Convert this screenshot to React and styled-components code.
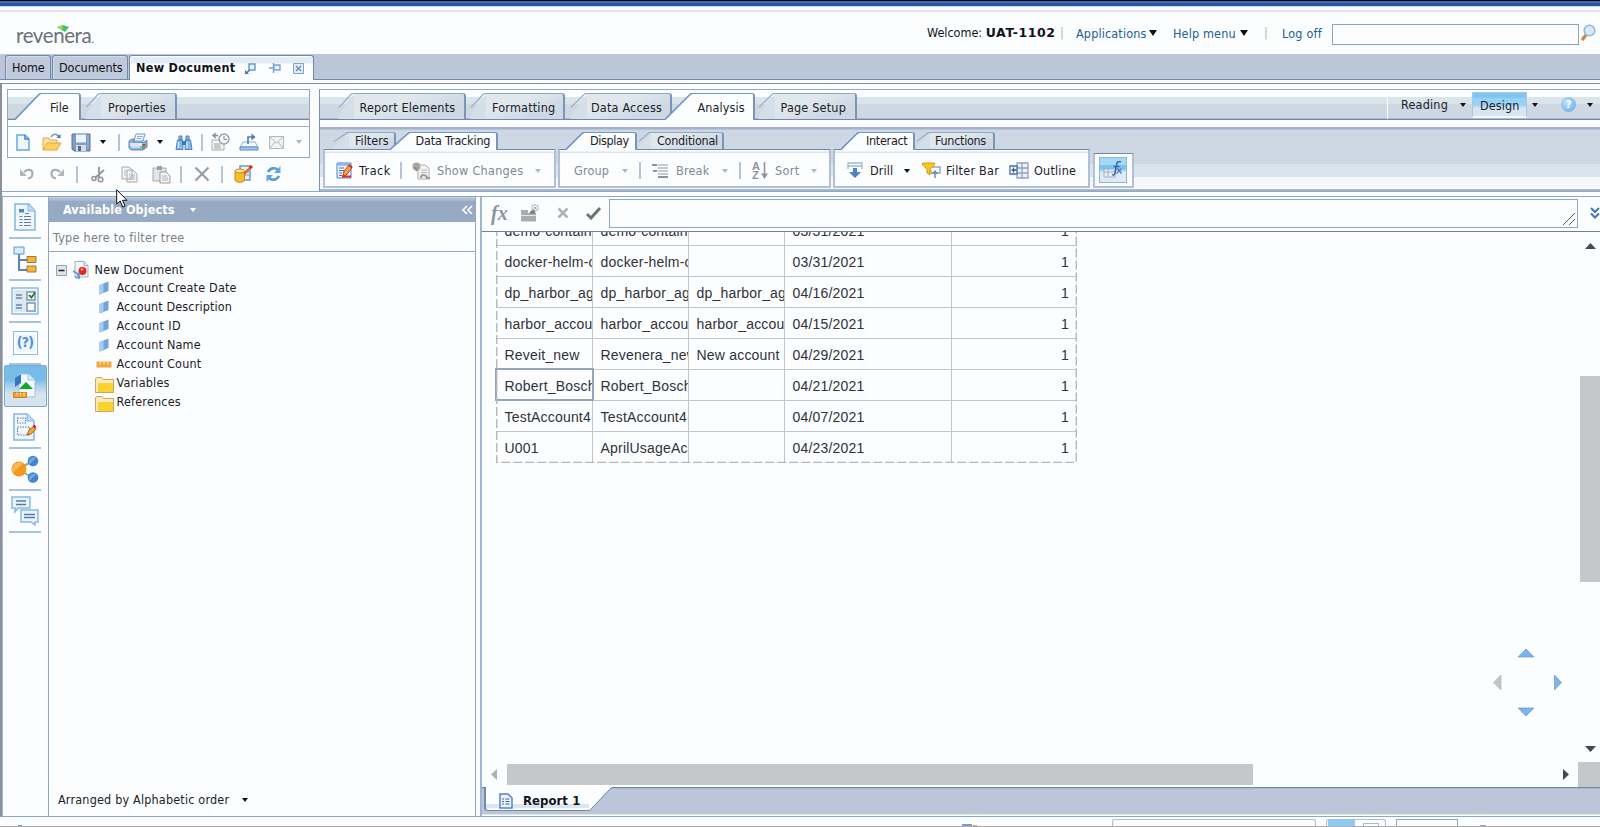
import React from 'react';
import styled, { createGlobalStyle, css } from 'styled-components';

const UI = "'DejaVu Sans Condensed', 'DejaVu Sans', sans-serif";
const LINE = '#91a7c4';
const DARK_LINE = '#7189ad';
const WHITE = '#fcfdff';

const GlobalStyle = createGlobalStyle`
  * { box-sizing: border-box; }
  body { margin: 0; overflow: hidden; background: ${WHITE}; }
  svg { display: block; flex: none; }
`;

const Page = styled.div`
  width: 1600px;
  height: 827px;
  overflow: hidden;
  display: flex;
  flex-direction: column;
  background: ${WHITE};
  color: #1d2127;
  font-family: ${UI};
  font-size: 12.5px;
  line-height: 16px;
  white-space: nowrap;
`;

/* ---------- shared bits ---------- */
const Text = styled.span`
  flex: none;
  margin-left: ${(p) => p.$ml || 0}px;
  width: ${(p) => (p.$w ? `${p.$w}px` : 'auto')};
  color: ${(p) => p.$color || 'inherit'};
  font-weight: ${(p) => (p.$bold ? 'bold' : 'normal')};
  letter-spacing: ${(p) => (p.$ls === undefined ? 0.1 : p.$ls)}px;
`;

const Slot = styled.span`
  flex: none;
  display: flex;
  margin-left: ${(p) => p.$ml || 0}px;
`;

const Caret = styled.span`
  flex: none;
  margin-left: ${(p) => p.$ml || 0}px;
  border: ${(p) => p.$s || 3}px solid transparent;
  border-top: ${(p) => p.$h || 4}px solid ${(p) => p.$color || '#111'};
  border-bottom: 0;
`;

const Divider = styled.span`
  flex: none;
  width: 2px;
  height: 17px;
  margin-left: ${(p) => p.$ml || 0}px;
  background: #b3c3d9;
`;

/* ---------- header ---------- */
const TopStripe = styled.div`
  flex: none;
  height: 12px;
  background: linear-gradient(#000 0 1px, #3f6bb5 1px 3px, #2d53a4 3px 6px, #c3d3ea 6px 7px, ${WHITE} 7px 10px, #dde5f2 10px 12px);
`;

const Header = styled.header`
  flex: none;
  height: 42px;
  display: flex;
  align-items: center;
`;

const Logo = styled.div`
  position: relative;
  width: 909px;
  padding: 8px 0 0 16px;
  color: #6a7078;
  font-family: Lato, sans-serif;
  font-size: 20.5px;
  letter-spacing: -0.4px;
  line-height: 24px;
  svg { position: absolute; left: 57px; top: 10px; }
  small { font-size: 12px; }
`;

const UserName = styled.b`
  font-family: 'DejaVu Sans', sans-serif;
  letter-spacing: 0.6px;
`;

const HeaderLink = styled(Text)`
  color: #22608f;
  padding-top: 1px;
`;

const SearchBox = styled.div`
  flex: none;
  width: 247px;
  height: 21px;
  margin-left: 8px;
  margin-top: 2px;
  border: 1px solid #89a3c4;
`;

/* ---------- document tabs ---------- */
const DocTabs = styled.nav`
  flex: none;
  height: 26px;
  display: flex;
  align-items: flex-end;
  padding-left: 5px;
  background: #bbc6d9;
  border-bottom: 1px solid ${DARK_LINE};
`;

const DocTab = styled.div`
  height: ${(p) => (p.$active ? 25 : 24)}px;
  width: ${(p) => p.$w}px;
  margin-right: 1px;
  margin-bottom: ${(p) => (p.$active ? -1 : 0)}px;
  display: flex;
  align-items: center;
  padding-left: 6px;
  border: 1px solid ${DARK_LINE};
  border-bottom: 0;
  border-radius: 3px 3px 0 0;
  background: ${(p) => (p.$active ? `linear-gradient(#e4ecf3 0 7px, ${WHITE} 8px)` : '#c0cadb')};
  box-shadow: inset 1px 1px 0 ${(p) => (p.$active ? '#fff' : '#d3dbe7')};
  color: #10141a;
`;

const Gap = styled.div`
  flex: none;
  height: 4px;
  border-bottom: 1px solid #87909e;
`;

/* ---------- ribbon ---------- */
const Ribbon = styled.section`
  flex: none;
  height: 113px;
  display: flex;
  border-bottom: 1px solid #8ca9c7;
  border-left: 2px solid #8b909c;
  padding-top: 5px;
`;

const FileSide = styled.div`
  width: 317px;
  height: 103px;
  padding-left: 5px;
  border-bottom: 1px solid #8ca9c7;
`;

const FileBox = styled.div`
  width: 303px;
  height: 69px;
  border: 1px solid ${LINE};
`;

const TabStrip = styled.div`
  height: 30px;
  display: flex;
  align-items: flex-end;
  background: linear-gradient(${WHITE} 0 7px, #dae4eb 7px 14px, #ced8e3 14px 28px, #a9b9cf 28px 29px, ${DARK_LINE} 29px 30px);
`;

const TabWrap = styled.div`
  position: relative;
  z-index: ${(p) => (p.$active ? 1 : 0)};
  display: flex;
  height: ${(p) => p.$h}px;
  margin-left: ${(p) => p.$ml}px;
  margin-bottom: ${(p) => (p.$active ? 0 : 1)}px;
`;

const TabBody = styled.div`
  width: ${(p) => p.$w}px;
  padding-left: ${(p) => p.$pad}px;
  padding-top: ${(p) => (p.$small ? 0 : 6)}px;
  border-top: 1px solid ${(p) => (p.$active ? '#6f9acb' : LINE)};
  border-right: 2px solid #7c94b8;
  border-top-right-radius: 3px;
  letter-spacing: ${(p) => p.$ls}px;
  ${(p) => (p.$active
    ? css`background: ${WHITE};`
    : css`background: linear-gradient(160deg, #e0e8ee 35%, #ced8e3 75%);`)}
`;

const Slant = ({ w, h, active }) => (
  <svg width={w} height={h}>
    {active && <path d={`M0 ${h}L${w} 0V${h}Z`} fill={WHITE} />}
    {!active && <path d={`M${w * 0.2} ${h * 0.7}L${w} 1V${h}H0Z`} fill="#d5dfe8" />}
    {active
      ? <path d={`M0 ${h - 0.5}L${w - 2} 1.5Q${w - 1} .5 ${w} .5`} fill="none" stroke="#7094c0" strokeWidth="1.6" />
      : <path d={`M1 ${h * 0.55}L${w - 3} 1.5Q${w - 2} .5 ${w} .5`} fill="none" stroke="#94abc8" strokeWidth="1.1" />}
  </svg>
);

const Tab = ({ label, ml, slant, w, pad, active, small, ls = 0 }) => {
  const h = (small ? 17 : 26) + (active ? 1 : 0);
  return (
    <TabWrap $ml={ml} $h={h} $active={active}>
      <Slant w={slant} h={h} active={active} />
      <TabBody $w={w} $pad={pad} $active={active} $small={small} $ls={ls}>{label}</TabBody>
    </TabWrap>
  );
};

const StripGap = styled.div`
  height: ${(p) => p.$h || 7}px;
  border-bottom: 1px solid #a0b2cc;
`;

const IconRow = styled.div`
  height: ${(p) => p.$h}px;
  display: flex;
  align-items: center;
`;

const MainRibbon = styled.div`
  flex: 1;
  height: 103px;
  border-top: 1px solid ${LINE};
  border-left: 1px solid #7c94b8;
  border-bottom: 1px solid #91a7c4;
`;

const SubRibbon = styled.div`
  height: 63px;
  display: flex;
  align-items: flex-end;
  padding: 0 0 3px 3px;
  background: linear-gradient(#a0b2cc 0 1px, #b7c4d6 1px 2px, #ced8e4 2px 36px, #dae4ed 36px 49px, #f4f8fc 49px 59px, ${WHITE} 59px 61px, #a4b6cf 61px 63px);
`;

const Group = styled.div`
  width: ${(p) => p.$w}px;
  margin-right: ${(p) => (p.$mr === undefined ? 2 : p.$mr)}px;
`;

const SubTabs = styled.div`
  height: 18px;
  display: flex;
  align-items: flex-end;
  position: relative;
  margin-bottom: -1px;
`;

const GroupBox = styled.div`
  height: ${(p) => p.$h || 39}px;
  display: flex;
  align-items: center;
  padding-top: ${(p) => (p.$h ? 0 : 5)}px;
  background: ${(p) => (p.$h ? WHITE : `linear-gradient(${WHITE} 0 1px, #dbe5ef 2px 3px, ${WHITE} 3px)`)};
  border: 2px solid #b2c0d5;
  border-top: 1px solid ${DARK_LINE};
`;

const FxButton = styled.div`
  width: 28px;
  height: 26px;
  margin-left: 4px;
  padding: 3px;
  border: 1px solid #8fb7dc;
  background: linear-gradient(#a5d8f5 0 30%, #7cc2ee 30% 45%, #dcebf6 60%);
`;

const ModeBar = styled.div`
  align-self: stretch;
  margin-left: auto;
  width: 213px;
  height: 29px;
  display: flex;
  align-items: center;
  border-left: 1px solid ${WHITE};
`;

const DesignButton = styled.div`
  width: 55px;
  height: 26px;
  margin-left: 6px;
  padding: 5px 0 0 7px;
  border: 1px solid #a7c8e3;
  border-bottom: 2px solid #f4fbff;
  background: linear-gradient(#7fc6f0 0 5px, #97d2f5 5px 12px, #d7e5f1 15px);
  letter-spacing: 0.1px;
`;

/* ---------- workspace ---------- */
const Workspace = styled.main`
  flex: none;
  height: 620px;
  display: flex;
  border-bottom: 1px solid #8ca9c7;
  border-left: 2px solid #8b909c;
`;

const Rail = styled.aside`
  flex: none;
  width: 47px;
  padding-right: 1px;
  border-right: 1px solid ${LINE};
  border-left: 1px solid #a8b9d0;
  display: flex;
  flex-direction: column;
  align-items: center;
`;

const RailItem = styled.div`
  flex: none;
  width: ${(p) => (p.$active ? 43 : 32)}px;
  height: 42px;
  display: flex;
  align-items: center;
  justify-content: center;
  border-bottom: 2px solid #a5c3dd;
  ${(p) => p.$active && css`
    border: 1px solid #7ca8cf;
    border-radius: 2px;
    background: linear-gradient(#78bde9 0 14px, #9bcbeb 18px, #d8e3ed 28px);
  `}
`;

const Objects = styled.section`
  flex: none;
  width: 427px;
  display: flex;
  flex-direction: column;
  border-right: 1px solid ${LINE};
`;

const ObjectsHead = styled.div`
  height: 25px;
  display: flex;
  align-items: center;
  padding: 1px 0 0 14px;
  color: #fff;
  background: linear-gradient(#c3cfdf 0, #97aac4 5px);
`;

const FilterBox = styled.div`
  height: 30px;
  padding: 8px 0 0 4px;
  color: #7c8085;
  border-bottom: 1px solid #8ca9c7;
  letter-spacing: 0.26px;
`;

const Tree = styled.div`
  flex: 1;
  padding-top: 9px;
`;

const TreeRow = styled.div`
  height: ${(p) => p.$h || 19}px;
  display: flex;
  align-items: center;
`;

const TreeIcon = styled.span`
  flex: none;
  width: 20px;
  margin-left: 45px;
  padding-top: ${(p) => p.$drop || 0}px;
  display: flex;
  justify-content: center;
`;

const Arranged = styled.div`
  height: 33px;
  padding: 0 0 0 9px;
  display: flex;
  align-items: center;
`;

const Report = styled.section`
  flex: 1;
  min-width: 0;
  margin-left: 4px;
  border-left: 2px solid #a0b5cf;
  display: flex;
  flex-direction: column;
`;

const FormulaBar = styled.div`
  flex: none;
  height: 35px;
  display: flex;
  align-items: center;
  padding-bottom: 3px;
  border-bottom: 1px solid #74809a;
`;

const FormulaInput = styled.div`
  flex: none;
  width: 969px;
  height: 29px;
  margin: 1px 0 0 8px;
  display: flex;
  align-items: flex-end;
  justify-content: flex-end;
  padding: 2px;
  border: 1px solid ${LINE};
`;

const Canvas = styled.div`
  flex: 1;
  min-height: 0;
  display: flex;
  overflow: hidden;
`;

const Sheet = styled.div`
  position: relative;
  flex: 1;
  overflow: hidden;
  padding-left: 14px;
`;

const Grid = styled.div`
  position: relative;
  width: 581px;
  margin-top: -17px;
`;

const DashFrame = styled.svg`
  position: absolute;
  left: 0;
  top: 0;
`;

const GridRow = styled.div`
  display: grid;
  grid-template-columns: 97px 96px 96px 167px 125px;
  height: 31px;
  border-bottom: 1px solid ${(p) => (p.$last ? 'transparent' : '#c3c5c9')};
`;

const Cell = styled.div`
  overflow: hidden;
  padding: 8px 8px 0 7.5px;
  border-right: 1px solid #c3c5c9;
  color: #2f3237;
  font-family: 'Liberation Sans', Arial, sans-serif;
  font-size: 14px;
  letter-spacing: 0.2px;
  text-overflow: clip;
  &:nth-child(-n + 3) { padding-right: 0; }
  &:first-child { padding-left: 8.5px; }
  &:last-child { text-align: right; border-right: 0; }
  ${(p) => p.$selected && css`
    outline: 2px solid #93a5b8;
    outline-offset: -1px;
    padding-right: 1px;
    margin: -1px 0 0 0;
    padding-top: 9px;
  `}
`;

const NavPad = styled.svg`
  position: absolute;
  left: 1007px;
  top: 415px;
`;

const VScroll = styled.div`
  flex: none;
  width: 22px;
  display: flex;
  flex-direction: column;
  align-items: center;
  padding: 11px 0 0 2px;
`;

const VThumb = styled.div`
  width: 20px;
  height: 206px;
  margin: 127px 0 164px;
  background: #c6c7c9;
`;

const HScroll = styled.div`
  flex: none;
  height: 25px;
  display: flex;
  align-items: center;
  padding-left: 9px;
`;

const HThumb = styled.div`
  width: 746px;
  height: 21px;
  margin-left: 10px;
  background: #c6c7c9;
`;

const Corner = styled.div`
  width: 22px;
  height: 25px;
  margin-left: auto;
  background: #c6c7c9;
`;

const SheetTabs = styled.div`
  flex: none;
  height: 29px;
  display: flex;
  align-items: flex-start;
  border-top: 1px solid ${DARK_LINE};
  background: linear-gradient(#a9b8cf 0 1px, #bbc6d9 1px 26px, #dfe8f1 26px 27px, ${WHITE} 27px);
`;

const SheetTab = styled.div`
  width: 105px;
  height: 24px;
  margin: -1px 0 0 2px;
  display: flex;
  align-items: center;
  padding: 4px 0 0 13px;
  border-left: 2px solid ${DARK_LINE};
  border-bottom: 1px solid ${DARK_LINE};
  border-radius: 0 0 0 4px;
  background: linear-gradient(${WHITE} 0 17px, #dce6ef 17px 21px, ${WHITE} 21px);
  color: #10141a;
  font-size: 13px;
`;

const StatusBar = styled.footer`
  flex: none;
  height: 10px;
  display: flex;
  align-items: flex-end;
  border-bottom: 1px solid #a9abae;
`;

const StatusBox = styled.div`
  width: ${(p) => p.$w}px;
  height: 7px;
  margin-left: ${(p) => p.$ml}px;
  padding-left: 1px;
  display: flex;
  align-items: flex-end;
  border: 1px solid ${(p) => (p.$blue ? '#8ca9c7' : '#b9bbbf')};
  border-bottom: 0;
  border-radius: ${(p) => (p.$blue ? 0 : '3px 3px 0 0')};
`;

const StatusOn = styled.div`
  width: 27px;
  height: 6px;
  background: #8ccbf3;
`;

const StatusPane = styled.div`
  width: 16px;
  height: 3px;
  margin-left: 8px;
  border: 1px solid #9dbde0;
  border-bottom: 0;
`;

const Mark = styled.i`
  width: ${(p) => p.$w}px;
  height: ${(p) => p.$h || 1}px;
  margin-left: ${(p) => p.$ml}px;
  background: ${(p) => p.$c};
`;

const Pointer = styled.svg`
  position: absolute;
  left: 116px;
  top: 189px;
  z-index: 5;
`;

/* ---------- icons ---------- */
const Icon = ({ w = 20, h = 20, children, ...rest }) => (
  <svg width={w} height={h} viewBox={`0 0 ${w} ${h}`} fill="none" {...rest}>{children}</svg>
);

const NewIcon = () => (
  <Icon w={14} h={17}><path d="M1 1h8l4 4v11H1z" fill="#eff7fe" stroke="#6aa7df" strokeWidth="1.5" /><path d="M9 1v4h4" stroke="#3f87cc" strokeWidth="1.5" /></Icon>
);
const OpenIcon = () => (
  <Icon w={20} h={18}>
    <path d="M1 17V5h6l1 2h7v3" fill="#fbe3a0" stroke="#e0a944" />
    <path d="M1 17l4-7h14l-4 7z" fill="#fccf5e" stroke="#e0a944" />
    <path d="M9 4c2-4 7-3 8 0" stroke="#6d8bad" strokeWidth="1.4" /><path d="M18.500 1v4h-4z" fill="#4d7096" />
  </Icon>
);
const SaveIcon = () => (
  <Icon w={20} h={19}>
    <path d="M1 1h18v17H3l-2-2z" fill="#7f9cc2" stroke="#5376a6" />
    <path d="M5 1.500h10v8H5z" fill="#edf3fa" /><path d="M5 12h10v6H5z" fill="#d6dce4" /><path d="M7 13h3v5H7z" fill="#4d6b96" />
    <path d="M17 2v13" stroke="#9db8da" />
  </Icon>
);
const PrintIcon = () => (
  <Icon w={20} h={18}>
    <path d="M6 8l2-7h9l-2 7z" fill="#f2f7fc" stroke="#7996b9" />
    <path d="M9 3.500h6M8.500 5.500h5" stroke="#8db2de" />
    <path d="M1 8l3-2h2l-1 3h11l3-2v7l-4 3H3l-2-2z" fill="#8fb3dc" stroke="#5f87b9" />
    <path d="M2 10h12v3H2z" fill="#dce9f7" /><path d="M3 14h9" stroke="#dce9f7" strokeWidth="1.5" />
    <path d="M14.500 12h3" stroke="#d33" strokeWidth="2" /><path d="M14 14.500h3" stroke="#2db34a" strokeWidth="2" />
  </Icon>
);
const FindIcon = () => (
  <Icon w={18} h={17}>
    <path d="M4 2h3v4H4zM11 2h3v4h-3zM2.500 6h5L8 15.500H1zM10.500 6h5L17 15.500h-7z" fill="#82b7e8" stroke="#4a80bb" />
    <path d="M7 7h4v4H7z" fill="#3d76b5" /><path d="M3.500 8v6M12 8v6" stroke="#d7eafa" strokeWidth="1.4" />
  </Icon>
);
const HistoryIcon = () => (
  <Icon w={19} h={18}>
    <path d="M1 7h9l3 3v7H1z" fill="#f3f4f5" stroke="#a9adb3" /><path d="M3 11h6M3 13h7M3 15h7" stroke="#9fa3a9" />
    <circle cx="13" cy="6" r="5" fill="#f3f4f5" stroke="#9c9fa4" strokeWidth="1.500" />
    <path d="M13 3v3.500h3" stroke="#8a8d92" /><path d="M7 2.500H3M5 0L2 2.500 5 5" stroke="#8b8f95" strokeWidth="1.500" />
  </Icon>
);
const ExportIcon = () => (
  <Icon w={20} h={18}>
    <path d="M4 9L1 14h18l-3-5z" fill="#f2f7fc" stroke="#8fb2d8" /><path d="M1 14h18v3H1z" fill="#a9c9ea" stroke="#5a89bd" />
    <path d="M9 11V4h4" stroke="#4d7ab1" strokeWidth="1.600" /><path d="M12.500 0.500l4 3.500-4 3.500z" fill="#4d7ab1" />
  </Icon>
);
const MailIcon = () => (
  <Icon w={15} h={13}><path d="M.5.5h14v12H.5z" fill="#f2f3f5" stroke="#b4b7bb" /><path d="M1 1l6.500 6L14 1M1 12l5-6M14 12L9 6" stroke="#b4b7bb" /></Icon>
);
const UndoIcon = ({ flip }) => (
  <Icon w={16} h={14}>
    <g transform={flip ? 'matrix(-1 0 0 1 16 0)' : undefined}>
      <path d="M5 5c3-3.500 8.500-2.500 8.500 1.500 0 3-1.500 4.500-4.500 5" stroke="#a9aeb4" strokeWidth="2.200" /><path d="M1 2v7h7z" fill="#b3b7bc" />
    </g>
  </Icon>
);
const CutIcon = () => (
  <Icon w={15} h={17}>
    <path d="M8 1v10M13 4L4 12" stroke="#8e959d" strokeWidth="1.800" />
    <circle cx="3" cy="12.500" r="2" stroke="#8e959d" strokeWidth="1.500" /><circle cx="9.500" cy="13.500" r="2.300" stroke="#8e959d" strokeWidth="1.500" />
  </Icon>
);
const CopyIcon = () => (
  <Icon w={17} h={17}>
    <path d="M1 1h7l3 3v9H1zM6 4h6l4 4v8H6z" fill="#f2f3f5" stroke="#a5aab1" /><path d="M3 5h3M3 7h2M3 9h2M8 9h6M8 11h6M8 13h6" stroke="#b5bac0" />
  </Icon>
);
const PasteIcon = () => (
  <Icon w={19} h={19}>
    <path d="M1 3h13v13H1z" fill="#e1e4e8" stroke="#a5aab1" /><path d="M5 1h5v4H5z" fill="#a39e92" />
    <path d="M8 7h6l4 4v7H8z" fill="#f5f6f7" stroke="#959ba2" /><path d="M10 11h5M10 13h6M10 15h6" stroke="#aeb3b9" />
  </Icon>
);
const CrossIcon = ({ s = 16, color = '#969ca4', sw = 2.2 }) => (
  <Icon w={s} h={s}><path d={`M1.500 1.500L${s - 1.5} ${s - 1.5}M${s - 1.5} 1.500L1.500 ${s - 1.5}`} stroke={color} strokeWidth={sw} /></Icon>
);
const EditDataIcon = () => (
  <Icon w={19} h={18}>
    <path d="M6 1h10v14H6z" fill="#e9f1fb" stroke="#7098cc" strokeWidth="1.500" /><path d="M11 7h4M11 10h4" stroke="#7098cc" />
    <path d="M1 6v9c0 3 9.500 3 9.500 0V6z" fill="#f9bd2c" stroke="#c8851a" /><ellipse cx="5.700" cy="6" rx="4.800" ry="2" fill="#ffe490" stroke="#c8851a" />
    <path d="M10 9l7-7" stroke="#d9761d" strokeWidth="2.500" /><path d="M16 3l2-2" stroke="#c9302c" strokeWidth="3" />
  </Icon>
);
const RefreshIcon = () => (
  <Icon w={17} h={16}>
    <path d="M3 6c2-4 7-5 10-2M14 10c-2 4-7 5-10 2" stroke="#569bd9" strokeWidth="2.600" />
    <path d="M15.500 0v7H9z" fill="#62a7e3" /><path d="M1.500 16V9H8z" fill="#62a7e3" />
  </Icon>
);
const TrackIcon = () => (
  <Icon w={17} h={17}>
    <path d="M1 1h14v15H1z" fill="#edf4fc" stroke="#4c7ecb" /><path d="M1.500 2.500H14" stroke="#8fb4ea" strokeWidth="2.500" />
    <path d="M3 6h5M3 8.500h5M3 11h3M3 13.500h3" stroke="#4a72b4" />
    <path d="M7 14l1-5 5-6 3 2.500-5 7z" fill="#f4a13a" stroke="#cb392b" /><path d="M13 3l3 2.500" stroke="#cf2a20" strokeWidth="2" /><path d="M6 14.500h9" stroke="#e12b22" strokeWidth="2" />
  </Icon>
);
const ChangesIcon = () => (
  <Icon w={19} h={18}>
    <path d="M6 3h7l4 3v11H6z" fill="#f3f3f3" stroke="#acaeb2" /><path d="M9 8h6M9 10.500h6" stroke="#b4b7ba" />
    <circle cx="4.500" cy="4.500" r="4" fill="#aaa79e" /><path d="M3 5l2 4" stroke="#8b8a85" strokeWidth="2" />
    <path d="M9 16c0-4 5-4 6 0h3" stroke="#9b9c9e" strokeWidth="2" />
  </Icon>
);
const BreakIcon = () => (
  <Icon w={16} h={14}><path d="M6 1h10M6 7h10M6 10h10M6 13h10M6 4h10" stroke="#b3b9c0" strokeWidth="1.300" /><path d="M0 1h5M1 7h4M6 13h10" stroke="#8c949e" strokeWidth="2" /></Icon>
);
const SortLetters = styled.span`
  width: 9px;
  font-family: 'Liberation Sans', sans-serif;
  font-weight: bold;
  font-size: 11px;
  line-height: 9px;
  color: #8e959e;
  white-space: normal;
`;
const SortArrow = () => (
  <Icon w={7} h={17}><path d="M3.500 0v15" stroke="#8e959e" strokeWidth="1.600" /><path d="M0 11.500h7L3.500 17z" fill="#8e959e" /></Icon>
);
const DrillIcon = () => (
  <Icon w={16} h={17}><path d="M1 7V1h14v6M1 4h14" stroke="#9eb7d8" strokeWidth="1.300" /><path d="M6 6h4v4h4l-6 6-6-6h4z" fill="#4c82c4" /></Icon>
);
const FilterIcon = () => (
  <Icon w={19} h={17}>
    <path d="M9 5h9v6h-6M9 8v3h2" stroke="#9aa9bb" strokeWidth="1.500" /><path d="M13 16V9M10.500 12L13 9l2.500 3" stroke="#73889f" strokeWidth="1.400" />
    <path d="M.5 1h12v2L8 7v6l-3-2V7L.5 3z" fill="#ffc61a" stroke="#d79a12" />
  </Icon>
);
const OutlineIcon = () => (
  <Icon w={20} h={17}>
    <path d="M8 1h11v15H8zM8 6h11M8 11h11M13 1v15" fill="#eef3f9" stroke="#8ea3c2" strokeWidth="1.300" />
    <path d="M1 4h7v8H1z" fill="#fff" stroke="#4470a7" strokeWidth="1.300" /><path d="M2.500 8h5M4.500 5.500v5" stroke="#2c568f" strokeWidth="1.300" />
  </Icon>
);
const FxGlyph = styled.span`
  width: 17px;
  font-family: 'Liberation Serif', serif;
  font-style: italic;
  font-weight: bold;
  font-size: 20px;
  line-height: 20px;
  color: #8b94a0;
  margin-left: 9px;
`;
const HelpDot = styled.span`
  width: 15px;
  height: 15px;
  margin-left: 23px;
  border-radius: 50%;
  background: radial-gradient(circle at 40% 35%, #bfe1fb, #5ea6e0);
  color: #fff;
  font-weight: bold;
  font-size: 11px;
  line-height: 15px;
  text-align: center;
`;
const SearchIcon = () => (
  <Icon w={17} h={18}><path d="M6 11l-4 5" stroke="#d6883a" strokeWidth="3.500" /><circle cx="9.500" cy="6.500" r="5.300" fill="#d7eafb" stroke="#91b5dd" strokeWidth="1.600" /></Icon>
);

/* rail */
const DocLines = () => (
  <Icon w={22} h={28}>
    <path d="M1 1h14l6 7v19H1z" fill="#eff7fd" stroke="#82b6e4" strokeWidth="1.500" /><path d="M14 1v7h7" fill="#bddcf5" stroke="#82b6e4" />
    <path d="M5 6h5v3.500H5z" fill="#4d8bc8" /><path d="M11 10.500h4M5.500 13.500h3M10 13.500h7M5.500 16.500h3M10 16.500h7M5.500 19.500h3M10 19.500h7M5.500 22.500h3M10 22.500h7" stroke="#5f81aa" strokeWidth="1.200" />
  </Icon>
);
const MapIcon = () => (
  <Icon w={24} h={27}>
    <path d="M6 8v16h8M6 14h8" stroke="#6082b3" strokeWidth="2" /><path d="M1 1h10v7H1z" fill="#d8ecfb" stroke="#5e94ce" />
    <path d="M14 10.500h9v6h-9zM14 20h9v6h-9z" fill="#f5b53a" stroke="#9d7a3f" />
  </Icon>
);
const InputIcon = () => (
  <Icon w={28} h={28}>
    <path d="M1 1h26v26H1z" fill="#f4f9fd" stroke="#8fbce4" strokeWidth="1.500" /><path d="M3 3h22v22H3z" fill="#dbe8f3" />
    <path d="M5 8h6M5 11h6M5 18h6M5 21h6" stroke="#6d84a5" strokeWidth="1.400" />
    <path d="M16 5h8v8h-8zM16 16h8v8h-8z" fill="#fff" stroke="#8295ae" strokeWidth="1.500" /><path d="M18 8l2.500 2.500L24 5.500" stroke="#1f8b3a" strokeWidth="2" />
  </Icon>
);
const PromptBox = styled.span`
  width: 25px;
  height: 24px;
  border: 1.5px solid #8fbce4;
  background: #edf5fc;
  box-shadow: inset 0 0 0 2px #fff;
  color: #4f90cf;
  font-weight: bold;
  font-size: 14px;
  letter-spacing: -0.8px;
  line-height: 20px;
  text-align: center;
`;
const ObjectsIcon = () => (
  <Icon w={24} h={26}>
    <path d="M6 1h10l6 6v17H6z" fill="#f2f8fd" stroke="#97c3ea" /><path d="M2 5l6-4v9l-6 4z" fill="#3578be" />
    <path d="M15 1v6h7" fill="#d5e9f9" stroke="#97c3ea" /><path d="M13 9l7 7H6z" fill="#11ab20" />
    <path d="M.5 19.500h13v5H.5z" fill="#f3a033" stroke="#d77d17" /><path d="M4 19.500v3M7.500 19.500v3M11 19.500v3" stroke="#fff0c9" />
  </Icon>
);
const StructIcon = () => (
  <Icon w={24} h={28}>
    <path d="M1 1h13l7 7v19H1z" fill="#eff7fd" stroke="#82b6e4" strokeWidth="1.500" /><path d="M14 1v7h7" fill="#bddcf5" stroke="#82b6e4" />
    <path d="M4.500 5h8v5h-8zM4.500 14h12v8h-12z" stroke="#5f81aa" strokeWidth="1.100" strokeDasharray="1.500 1" />
    <path d="M14 22l2-5 5-4 2 3-5 5z" fill="#f4a82f" stroke="#a7622b" /><path d="M20.500 14l2-1" stroke="#d12" strokeWidth="3" />
  </Icon>
);
const LinkIcon = () => (
  <Icon w={28} h={28}>
    <path d="M7 14L22 6M7 14l15 9" stroke="#7ab59a" strokeWidth="2" /><circle cx="8" cy="14" r="7.500" fill="#f3981f" /><path d="M2 18A7.500 7.500 0 0112 8z" fill="#f9b75c" />
    <circle cx="22" cy="6" r="5.300" fill="#4385cb" /><circle cx="22" cy="22.500" r="5.300" fill="#4385cb" /><path d="M18.500 9.500a5.300 5.300 0 017-7zM18.500 26a5.300 5.300 0 017-7z" fill="#6ea6df" />
  </Icon>
);
const CommentIcon = () => (
  <Icon w={28} h={30}>
    <path d="M1 1h18v11H7l-3 4v-4H1zM10 14h17v12h-3v3l-4-3H10z" fill="#edf5fc" stroke="#86b9e6" strokeWidth="1.500" />
    <path d="M5 5h10M5 8.500h10M13 18.500h11M13 21.500h11" stroke="#567aa6" strokeWidth="1.400" />
  </Icon>
);

/* tree */
const DimIcon = () => <Icon w={10} h={14}><path d="M.5 4L9.500 .5V10L.5 13.500z" fill="#6fa4dc" /><path d="M.5 4L4.500 2.500v9.500L.5 13.500z" fill="#a6cbee" /></Icon>;
const MeasureIcon = () => <Icon w={16} h={7}><path d="M.5.5h15v6H.5z" fill="#f2a53b" /><path d="M4 0v3.500M8 0v3.500M12 0v3.500" stroke="#fdebc8" /></Icon>;
const FolderIcon = () => <Icon w={19} h={16}><path d="M.5 15.500V1.500L2 .5h5l1.500 2h10v13z" fill="#fbe9b8" stroke="#c9a566" /><path d="M3 6h15v9H3z" fill="#fbd32e" /></Icon>;
const RootIcon = () => (
  <Icon w={16} h={18}><path d="M2 .5h9l4 4V16H2z" fill="#f1f5fa" stroke="#9fb2ca" /><path d="M11 .5v4h4" stroke="#9fb2ca" /><circle cx="9.500" cy="10" r="4" fill="#dd2b20" /><circle cx="9" cy="8.500" r="1.300" fill="#f79a92" /><path d="M0 10l5 3v2M2 16l4 1 0-5" stroke="#5e97d2" strokeWidth="1.800" /></Icon>
);
const MinusBox = () => <Icon w={11} h={11}><path d="M.5.5h10v10H.5z" fill="#e1e4ea" stroke="#9aa2af" /><path d="M2.500 5.500h6" stroke="#1e222a" strokeWidth="1.500" /></Icon>;
const SheetIcon = () => <Icon w={14} h={16}><path d="M1 1h8l4 4v10H1z" fill="#eef4fc" stroke="#4f83cf" strokeWidth="1.500" /><path d="M3 6h2M6.500 6h4M3 8.500h2M6.500 8.500h4M3 11h2M6.500 11h4" stroke="#3b5f9c" strokeWidth="1.200" /></Icon>;
const PencilBlock = () => <Icon w={20} h={18}><path d="M0 6h7v3h8v8.500H0z" fill="#aaacaf" /><path d="M0 11.500h15" stroke="#e3e4e5" /><path d="M8 9l4-4 2 2v3z" fill="#777b80" /><path d="M14 0v8M10 4h9M11 1l6 6M17 1l-6 6" stroke="#a0a3a7" strokeWidth="1.100" strokeDasharray="2 1" /></Icon>;
const Tick = () => <Icon w={15} h={14}><path d="M1 8l4 4L14 2" stroke="#66786f" strokeWidth="3" /></Icon>;
const Triangle = ({ dir, color = '#46484b' }) => {
  const d = { up: 'M0 6L5.500 0L11 6Z', down: 'M0 0H11L5.500 6Z', left: 'M6 0V11L0 5.500Z', right: 'M0 0V11L6 5.500Z' }[dir];
  const tall = dir === 'left' || dir === 'right';
  return <Icon w={tall ? 6 : 11} h={tall ? 11 : 6}><path d={d} fill={color} /></Icon>;
};

/* ---------- data ---------- */
const fileTabs = [
  { label: 'File', ml: 7, slant: 26, w: 40, pad: 9, active: true },
  { label: 'Properties', ml: 4, slant: 16, w: 76, pad: 7, ls: 0.1 },
];
const ribbonTabs = [
  { label: 'Report Elements', ml: 18, slant: 16, w: 112, pad: 5.5, ls: 0.17 },
  { label: 'Formatting', ml: 4, slant: 16, w: 79, pad: 6, ls: 0.2 },
  { label: 'Data Access', ml: 5, slant: 17, w: 85, pad: 4, ls: 0.2 },
  { label: 'Analysis', ml: -7, slant: 27, w: 63, pad: 5.5, ls: 0.1, active: true },
  { label: 'Page Setup', ml: 3, slant: 17, w: 82, pad: 5.5, ls: 0.2 },
];

const treeItems = [
  { label: 'Account Create Date', icon: <DimIcon />, h: 17, ls: 0.18 },
  { label: 'Account Description', icon: <DimIcon />, h: 22, ls: 0.13 },
  { label: 'Account ID', icon: <DimIcon />, h: 16, ls: 0.35 },
  { label: 'Account Name', icon: <DimIcon />, h: 22, ls: 0.18 },
  { label: 'Account Count', icon: <MeasureIcon />, h: 16, ls: 0.2 },
  { label: 'Variables', icon: <FolderIcon />, h: 22, ls: 0.2, drop: 3 },
  { label: 'References', icon: <FolderIcon />, h: 16, ls: 0.2, drop: 3 },
];

const rows = [
  ['demo-contain', 'demo-contain', '', '03/31/2021', '1'],
  ['docker-helm-c', 'docker-helm-c', '', '03/31/2021', '1'],
  ['dp_harbor_ag', 'dp_harbor_ag', 'dp_harbor_ag', '04/16/2021', '1'],
  ['harbor_accou', 'harbor_accou', 'harbor_accou', '04/15/2021', '1'],
  ['Reveit_new', 'Revenera_new', 'New account', '04/29/2021', '1'],
  ['Robert_Bosch', 'Robert_Bosch', '', '04/21/2021', '1'],
  ['TestAccount4', 'TestAccount4', '', '04/07/2021', '1'],
  ['U001', 'AprilUsageAc', '', '04/23/2021', '1'],
];

const railIcons = [
  <DocLines />, <MapIcon />, <InputIcon />, <PromptBox>(?)</PromptBox>, <ObjectsIcon />, <StructIcon />, <LinkIcon />, <CommentIcon />,
];

const GREY = '#7f8894';
const PALE = '#a9b8cc';

export default function App() {
  return (
    <Page>
      <GlobalStyle />
      <TopStripe />
      <Header>
        <Logo>
          revenera<small>.</small>
          <Icon w={12} h={7}><path d="M0 2L6 0l6 2-4 5z" fill="#45c26a" /><path d="M0 2L6 0 5 5z" fill="#a4dc4e" /></Icon>
        </Logo>
        <Text $ml={18} $w={133} $color="#10141a" $ls={0}>Welcome: <UserName>UAT-1102</UserName></Text>
        <Text $w={16} $color="#b3ba9c">|</Text>
        <HeaderLink $w={70} $ls={0.15}>Applications</HeaderLink>
        <Caret $ml={3} $s={4.5} $h={6} />
        <HeaderLink $ml={16} $w={64} $ls={0.15}>Help menu</HeaderLink>
        <Caret $ml={3} $s={4.5} $h={6} />
        <Text $ml={16} $w={18} $color="#b3ba9c">|</Text>
        <HeaderLink $w={42} $ls={0.2}>Log off</HeaderLink>
        <SearchBox />
        <Slot $ml={1}><SearchIcon /></Slot>
      </Header>

      <DocTabs>
        <DocTab $w={46}><Text $ls={-0.15}>Home</Text></DocTab>
        <DocTab $w={76}><Text $ls={-0.05}>Documents</Text></DocTab>
        <DocTab $w={185} $active>
          <Text $bold $w={109} $ls={0.3}>New Document</Text>
          <Icon w={11} h={11}><path d="M4 1h6v6H4z" fill="#e6f1fb" stroke="#6c9bcc" strokeWidth="1.500" /><path d="M5 7L1 10" stroke="#4476ae" strokeWidth="1.500" /><path d="M0 7v4h4z" fill="#4476ae" /></Icon>
          <Slot $ml={13}><Icon w={12} h={10}><path d="M5 2h6v5H5zM4.500 0v10M0 5h4" fill="#e6f1fb" stroke="#79a5d2" strokeWidth="1.400" /></Icon></Slot>
          <Slot $ml={12}><Icon w={11} h={11}><path d="M.5.5h10v10H.5z" fill="#e2edf7" stroke="#79a5d2" /><path d="M3 3l5 5M8 3L3 8" stroke="#7d8ea3" strokeWidth="1.500" /></Icon></Slot>
        </DocTab>
      </DocTabs>
      <Gap />

      <Ribbon>
        <FileSide>
          <FileBox>
            <TabStrip>{fileTabs.map((t) => <Tab key={t.label} {...t} />)}</TabStrip>
            <StripGap />
            <IconRow $h={30}>
              <Slot $ml={8}><NewIcon /></Slot>
              <Slot $ml={12}><OpenIcon /></Slot>
              <Slot $ml={9}><SaveIcon /></Slot>
              <Caret $ml={9} />
              <Divider $ml={12} />
              <Slot $ml={8}><PrintIcon /></Slot>
              <Caret $ml={9} />
              <Slot $ml={12}><FindIcon /></Slot>
              <Divider $ml={8} />
              <Slot $ml={8}><HistoryIcon /></Slot>
              <Slot $ml={9}><ExportIcon /></Slot>
              <Slot $ml={10}><MailIcon /></Slot>
              <Caret $ml={12} $color={PALE} />
            </IconRow>
          </FileBox>
          <IconRow $h={32}>
            <Slot $ml={12}><UndoIcon /></Slot>
            <Slot $ml={14}><UndoIcon flip /></Slot>
            <Divider $ml={11} />
            <Slot $ml={13}><CutIcon /></Slot>
            <Slot $ml={15}><CopyIcon /></Slot>
            <Slot $ml={14}><PasteIcon /></Slot>
            <Divider $ml={9} />
            <Slot $ml={12}><CrossIcon /></Slot>
            <Divider $ml={11} />
            <Slot $ml={11}><EditDataIcon /></Slot>
            <Slot $ml={12}><RefreshIcon /></Slot>
          </IconRow>
        </FileSide>

        <MainRibbon>
          <TabStrip>
            {ribbonTabs.map((t) => <Tab key={t.label} {...t} />)}
            <ModeBar>
              <Text $ml={13} $w={50} $ls={0.2}>Reading</Text>
              <Caret $ml={9} />
              <DesignButton>Design</DesignButton>
              <Caret $ml={5} />
              <HelpDot>?</HelpDot>
              <Caret $ml={11} />
            </ModeBar>
          </TabStrip>
          <StripGap $h={8} />
          <SubRibbon>
            <Group $w={233}>
              <SubTabs>
                <Tab small label="Filters" ml={10} slant={16} w={47} pad={6} />
                <Tab small active label="Data Tracking" ml={-6} slant={20} w={88} pad={5.5} ls={-0.17} />
              </SubTabs>
              <GroupBox>
                <Slot $ml={11}><TrackIcon /></Slot>
                <Text $ml={6} $w={43} $ls={0.5}>Track</Text>
                <Divider $ml={-2} />
                <Slot $ml={10}><ChangesIcon /></Slot>
                <Text $ml={6} $w={98} $color={GREY} $ls={0.3}>Show Changes</Text>
                <Caret $color={PALE} />
              </GroupBox>
            </Group>
            <Group $w={273}>
              <SubTabs>
                <Tab small active label="Display" ml={8} slant={18} w={53} pad={6} ls={-0.4} />
                <Tab small label="Conditional" ml={1} slant={13} w={73} pad={6} ls={-0.25} />
              </SubTabs>
              <GroupBox>
                <Text $ml={14} $w={48} $color={GREY} $ls={0.2}>Group</Text>
                <Caret $color={PALE} />
                <Divider $ml={11} />
                <Slot $ml={11}><BreakIcon /></Slot>
                <Text $ml={8} $w={46} $color={GREY} $ls={0.2}>Break</Text>
                <Caret $color={PALE} />
                <Divider $ml={11} />
                <Slot $ml={11}><SortLetters>A Z</SortLetters><SortArrow /></Slot>
                <Text $ml={7} $w={36} $color={GREY} $ls={0.4}>Sort</Text>
                <Caret $color={PALE} />
              </GroupBox>
            </Group>
            <Group $w={257} $mr={3}>
              <SubTabs>
                <Tab small active label="Interact" ml={8} slant={18} w={56} pad={7} ls={-0.3} />
                <Tab small label="Functions" ml={1} slant={14} w={65} pad={5} ls={-0.3} />
              </SubTabs>
              <GroupBox>
                <Slot $ml={12}><DrillIcon /></Slot>
                <Text $ml={7} $w={34}>Drill</Text>
                <Caret />
                <Slot $ml={12}><FilterIcon /></Slot>
                <Text $ml={5} $w={63} $ls={0.25}>Filter Bar</Text>
                <OutlineIcon />
                <Text $ml={5} $ls={0.2}>Outline</Text>
              </GroupBox>
            </Group>
            <Group $w={41} $mr={0}>
              <GroupBox $h={35}>
                <FxButton>
                  <Icon w={20} h={18}><path d="M1 8h11v8H1z" fill="#e9eef5" stroke="#a3b1c3" /><path d="M1 11h11M5 8v8" stroke="#a3b1c3" /><path d="M18 1c-3-1.500-4 0-4.500 3L12 12c-.5 2-1.500 2.500-3 1.500M10.500 5.500h6" stroke="#3566a8" strokeWidth="1.500" /><path d="M14.500 7.500l4 5M18.500 7.500l-5 5" stroke="#4d7dba" strokeWidth="1.300" /></Icon>
                </FxButton>
              </GroupBox>
            </Group>
          </SubRibbon>
        </MainRibbon>
      </Ribbon>

      <Workspace>
        <Rail>
          {railIcons.map((icon, i) => <RailItem key={i} $active={i === 4}>{icon}</RailItem>)}
        </Rail>
        <Objects>
          <ObjectsHead>
            <Text $bold $w={127}>Available Objects</Text>
            <Caret $color="#fff" $s={3.5} $h={4} />
            <Slot $ml={266}>
              <Icon w={11} h={10}><path d="M5 1L1 5l4 4M10 1L6 5l4 4" stroke="#fff" strokeWidth="1.700" /></Icon>
            </Slot>
          </ObjectsHead>
          <FilterBox>Type here to filter tree</FilterBox>
          <Tree>
            <TreeRow $h={18}>
              <Slot $ml={7}><MinusBox /></Slot>
              <Slot $ml={6}><RootIcon /></Slot>
              <Text $ml={5.5} $ls={0.22}>New Document</Text>
            </TreeRow>
            {treeItems.map((item) => (
              <TreeRow key={item.label} $h={item.h}>
                <TreeIcon $drop={item.drop}>{item.icon}</TreeIcon>
                <Text $ml={2.5} $ls={item.ls}>{item.label}</Text>
              </TreeRow>
            ))}
          </Tree>
          <Arranged>
            <Text $w={184} $ls={0.18}>Arranged by Alphabetic order</Text>
            <Caret />
          </Arranged>
        </Objects>
        <Report>
          <FormulaBar>
            <FxGlyph>fx</FxGlyph>
            <Slot $ml={13}><PencilBlock /></Slot>
            <Slot $ml={16}><CrossIcon s={12} color="#b0b3b8" sw={2.6} /></Slot>
            <Slot $ml={17}><Tick /></Slot>
            <FormulaInput><Icon w={12} h={12}><path d="M0 12L12 0M6 12l6-6" stroke="#5b6068" /></Icon></FormulaInput>
            <Slot $ml={12}><Icon w={10} h={12}><path d="M1 1l4 4 4-4M1 6.500l4 4 4-4" stroke="#4674b0" strokeWidth="2" /></Icon></Slot>
          </FormulaBar>
          <Canvas>
            <Sheet>
              <Grid>
                {rows.map((row, r) => (
                  <GridRow key={r} $last={r === rows.length - 1}>
                    {row.map((value, c) => <Cell key={c} $selected={r === 5 && c === 0}>{value}</Cell>)}
                  </GridRow>
                ))}
                <DashFrame width="581" height="248"><path d="M.75 0V247.500H580.300V0" fill="none" stroke="#b4b6b9" strokeWidth="1.400" strokeDasharray="9 3" /></DashFrame>
              </Grid>
              <NavPad width="76" height="70" viewBox="0 0 76 70">
                <path d="M29 10h16l-8-8z" fill="#7db4ea" stroke="#5690d4" strokeWidth=".6" />
                <path d="M29 61h16l-8 8z" fill="#7db4ea" stroke="#5690d4" strokeWidth=".6" />
                <path d="M65.500 28v15l7-7.500z" fill="#7db4ea" stroke="#5690d4" strokeWidth=".6" />
                <path d="M12 28v15l-7.500-7.500z" fill="#c2c4c7" stroke="#aaadb1" strokeWidth=".6" />
              </NavPad>
            </Sheet>
            <VScroll>
              <Triangle dir="up" />
              <VThumb />
              <Triangle dir="down" />
            </VScroll>
          </Canvas>
          <HScroll>
            <Triangle dir="left" color="#adafb1" />
            <HThumb />
            <Slot $ml={310}><Triangle dir="right" /></Slot>
            <Corner />
          </HScroll>
          <SheetTabs>
            <SheetTab><SheetIcon /><Text $bold $ml={10} $ls={0.05}>Report 1</Text></SheetTab>
            <Icon w={24} h={26} style={{ marginTop: -1 }}><path d="M0 0H23L1 23H0z" fill={WHITE} /><path d="M0 23.500Q2 23 3 21L21 2Q22 .5 24 .5" stroke={DARK_LINE} /></Icon>
          </SheetTabs>
        </Report>
      </Workspace>
      <StatusBar>
        <Mark $ml={18} $w={4} $c="#5f9bd2" />
        <Mark $ml={940} $w={10} $h={2} $c="#7f9ac6" />
        <Mark $ml={1} $w={4} $c="#e0a24b" />
        <StatusBox $ml={135} $w={204} />
        <StatusBox $ml={10} $w={60}><StatusOn /><StatusPane /></StatusBox>
        <StatusBox $ml={10} $w={62} $blue />
        <Mark $ml={22} $w={6} $c="#8ca9c7" />
      </StatusBar>
      <Pointer width="13" height="19" viewBox="0 0 13 19"><path d="M.7.7V15l3.500-3 2.500 6 2.300-1-2.500-5.700H11z" fill="#fff" stroke="#111" /></Pointer>
    </Page>
  );
}
